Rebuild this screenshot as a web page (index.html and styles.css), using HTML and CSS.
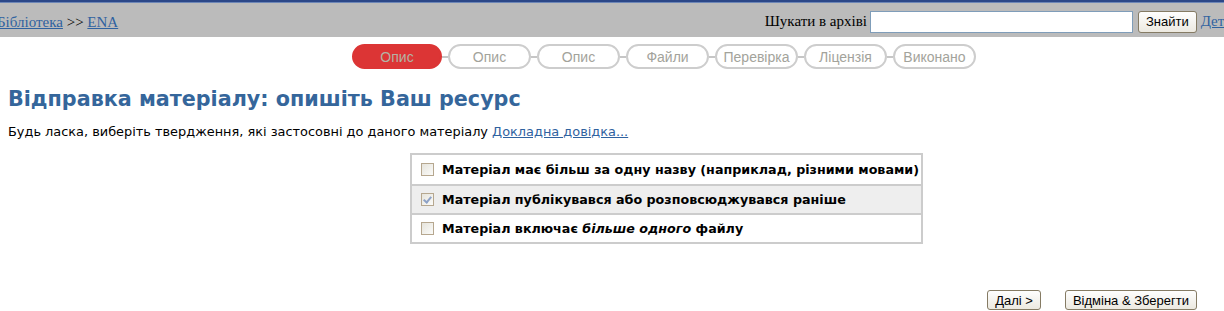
FILE: index.html
```html
<!DOCTYPE html>
<html lang="uk">
<head>
  <meta charset="UTF-8" />
  <title>Відправка матеріалу</title>
  <link rel="stylesheet" href="styles.css">
</head>
<body>

  <div class="topbar">
    <div class="crumbs">
      <a href="#">Бібліотека</a> &gt;&gt; <a href="#">ENA</a>
    </div>
    <form class="search">
      <label for="q">Шукати в архіві</label>
      <input type="text" id="q" />
      <button type="button">Знайти</button>
      <a href="#">Детальніше</a>
    </form>
  </div>

  <div class="steps">
    <span class="step current">Опис</span>
    <span class="link"></span>
    <span class="step">Опис</span>
    <span class="link"></span>
    <span class="step">Опис</span>
    <span class="link"></span>
    <span class="step">Файли</span>
    <span class="link"></span>
    <span class="step">Перевірка</span>
    <span class="link"></span>
    <span class="step">Ліцензія</span>
    <span class="link"></span>
    <span class="step">Виконано</span>
  </div>

  <h1 class="title">Відправка матеріалу: опишіть Ваш ресурс</h1>

  <p class="intro">Будь ласка, виберіть твердження, які застосовні до даного матеріалу <a href="#">Докладна довідка...</a></p>

  <div class="options">
    <label class="option">
      <input type="checkbox" />
      <span>Матеріал має більш за одну назву (наприклад, різними мовами)</span>
    </label>
    <label class="option checked">
      <input type="checkbox" checked />
      <span>Матеріал публікувався або розповсюджувався раніше</span>
    </label>
    <label class="option">
      <input type="checkbox" />
      <span>Матеріал включає <em>більше одного</em> файлу</span>
    </label>
  </div>

  <div class="actions">
    <button type="button">Далі &gt;</button>
    <button type="button">Відміна &amp; Зберегти</button>
  </div>

</body>
</html>
```

FILE: styles.css
```css
* {
  box-sizing: border-box;
}

html, body {
  overflow: hidden;
}

body {
  margin: 0;
  background: #fff;
  font-family: "DejaVu Sans", Verdana, sans-serif;
  color: #000;
}

a {
  color: #2f62a0;
}

/* top bar */
.topbar {
  height: 37px;
  background: #bbbbbb;
  border-top: 2px solid #2b4788;
  box-shadow: inset 0 1px 0 #6d86b6;
  display: flex;
  justify-content: space-between;
  align-items: center;
  padding-top: 4px;
  font-family: "Liberation Serif", "Times New Roman", serif;
  font-size: 15px;
}

.crumbs {
  margin-left: -3px;
  padding-top: 2px;
}

.search {
  display: flex;
  align-items: center;
  margin: 0 -52px 0 0;
}

.search label {
  margin-right: 3px;
}

.search input {
  width: 263px;
  height: 22px;
  border: 1px solid #7f9db9;
  background: #fff;
  margin: 0;
}

.search button {
  margin: 0 4px 0 5px;
  height: 22px;
  padding: 0 7px;
  font: 13px "Liberation Sans", Arial, sans-serif;
  background: linear-gradient(#fefefe, #ece9e0);
  border: 1px solid #857b64;
  border-radius: 3px;
}

/* progress */
.steps {
  display: flex;
  align-items: center;
  margin-top: 7px;
  padding-left: 352px;
  font-family: "Liberation Sans", Arial, sans-serif;
  font-size: 14px;
  color: #a3a39b;
}

.step {
  width: 83px;
  height: 25px;
  border: 2px solid #cdcdcd;
  border-radius: 13px;
  background: #fff;
  display: flex;
  align-items: center;
  justify-content: center;
}

.step.current {
  background: #dc3535;
  border-color: #dc3535;
  color: #b4b2a4;
  width: 90px;
}

.link {
  width: 6px;
  height: 2px;
  background: #c6c6c6;
}

/* heading */
.title {
  margin: 18px 0 0 8px;
  font-size: 20.7px;
  font-weight: bold;
  color: #35669b;
}

.intro {
  margin: 13px 0 0 8px;
  font-size: 12.9px;
}

/* options table */
.options {
  width: 513px;
  margin: 14px 0 0 410px;
  border: 2px solid #cccccc;
  border-top-width: 1px;
}

.option {
  display: flex;
  align-items: center;
  height: 30px;
  padding-left: 9px;
  border-top: 1px solid #cccccc;
  font-size: 12.7px;
  font-weight: bold;
}

.option + .option {
  height: 29px;
  border-top: 2px solid #cccccc;
}

.option.checked {
  background: #eeeeee;
}

.option input {
  appearance: none;
  position: relative;
  width: 13px;
  height: 13px;
  margin: 0 8px 0 0;
  border: 1px solid #b6a78f;
  background: linear-gradient(135deg, #e6e4dc, #fbfbf9);
}

.option input:checked::after {
  content: "";
  position: absolute;
  left: 3px;
  top: 1px;
  width: 3px;
  height: 6px;
  border: solid #8ea2c6;
  border-width: 0 2px 2px 0;
  transform: rotate(40deg);
}

.option em {
  font-style: italic;
}

/* buttons */
.actions {
  display: flex;
  justify-content: flex-end;
  gap: 24px;
  margin: 46px 27px 0 0;
}

.actions button {
  height: 20px;
  padding: 0 7px;
  font: 13px "Liberation Sans", Arial, sans-serif;
  background: linear-gradient(#fefefe, #ece9e0);
  border: 1px solid #857b64;
  border-radius: 3px;
}
```
